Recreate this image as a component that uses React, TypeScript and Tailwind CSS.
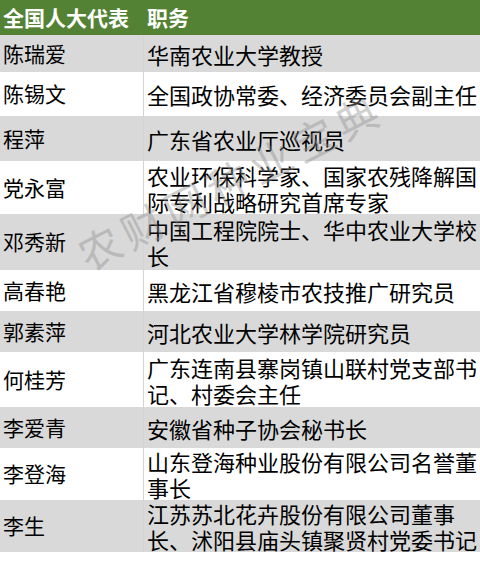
const rows: { name: string; duty: string; h: string }[] = [
  { name: "陈瑞爱", duty: "华南农业大学教授", h: "h-[37px]" },
  { name: "陈锡文", duty: "全国政协常委、经济委员会副主任", h: "h-[44px]" },
  { name: "程萍", duty: "广东省农业厅巡视员", h: "h-[45px]" },
  { name: "党永富", duty: "农业环保科学家、国家农残降解国际专利战略研究首席专家", h: "h-[53px]" },
  { name: "邓秀新", duty: "中国工程院院士、华中农业大学校长", h: "h-[56px]" },
  { name: "高春艳", duty: "黑龙江省穆棱市农技推广研究员", h: "h-[41px]" },
  { name: "郭素萍", duty: "河北农业大学林学院研究员", h: "h-[41px]" },
  { name: "何桂芳", duty: "广东连南县寨岗镇山联村党支部书记、村委会主任", h: "h-[55px]" },
  { name: "李爱青", duty: "安徽省种子协会秘书长", h: "h-[41px]" },
  { name: "李登海", duty: "山东登海种业股份有限公司名誉董事长", h: "h-[52px]" },
  { name: "李生", duty: "江苏苏北花卉股份有限公司董事长、沭阳县庙头镇聚贤村党委书记", h: "h-[52px]" },
];

export default function App() {
  return (
    <div className="relative w-[480px] h-[562px] overflow-hidden bg-white font-['Noto_Sans_CJK_SC','Noto_Sans',sans-serif] text-black">
      <div className="flex h-[35px] items-center bg-[#548235] text-white font-bold text-[21px]">
        <div className="w-[144px] pl-[3px]">全国人大代表</div>
        <div className="flex-1 pl-[3px]">职务</div>
      </div>
      {rows.map((r, i) => (
        <div
          key={r.name}
          className={`flex ${r.h} ${i % 2 === 0 ? "bg-[#d9d9d9]" : "bg-white"}`}
        >
          <div className="w-[144px] flex items-center pl-[3px] border-r border-[#d4d4d4] text-[21px]">
            {r.name}
          </div>
          <div className="flex-1 flex items-center pl-[3px] pr-[1px] text-[22px] leading-[26px]">
            {r.duty}
          </div>
        </div>
      ))}
      {/* watermark */}
      <div className="pointer-events-none absolute left-[230px] top-[180px] -translate-x-1/2 -translate-y-1/2 -rotate-[27deg] text-[42px] leading-none font-normal tracking-[6px] text-[#8c8c8c] opacity-40 whitespace-nowrap">
        农财网种业宝典
      </div>
    </div>
  );
}
